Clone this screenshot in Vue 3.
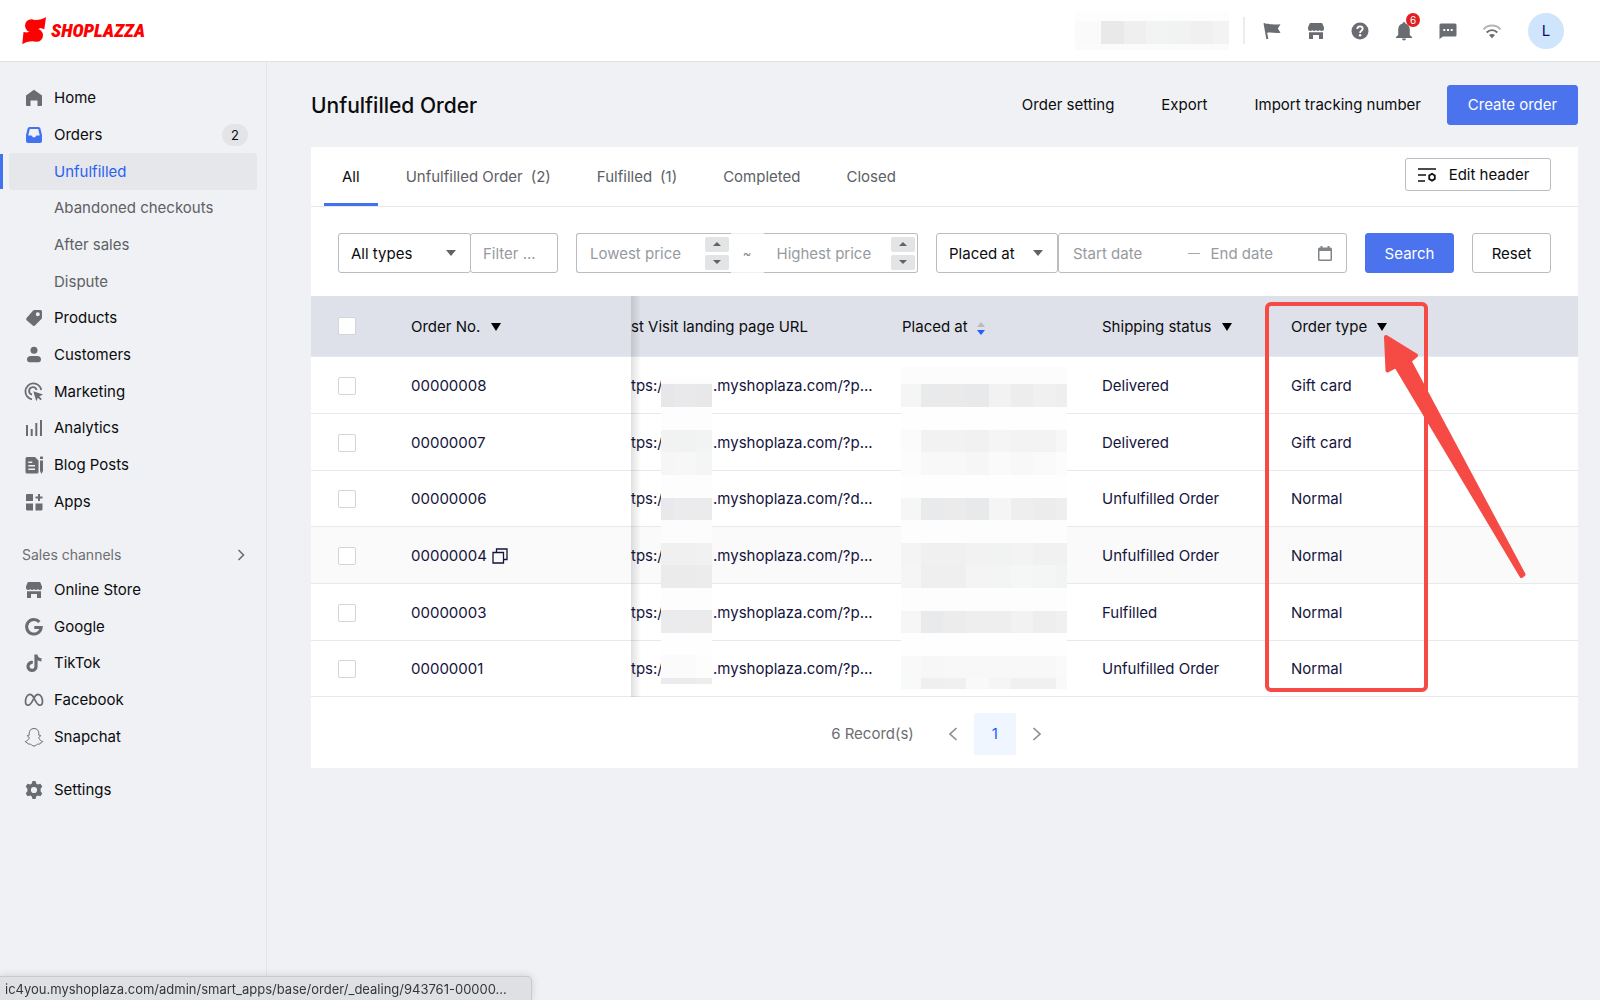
<script setup>
import { ref } from 'vue'

const icons = {
  home: '<path d="M10 1.800 18 7.400V17a1 1 0 0 1-1 1h-3.500v-5.500h-7V18H3a1 1 0 0 1-1-1V7.400Z"/>',
  orders:
    '<path fill-rule="evenodd" d="M5.500 2h9a2 2 0 0 1 1.900 1.500L18 10v6a2 2 0 0 1-2 2H4a2 2 0 0 1-2-2v-6l1.600-6.500A2 2 0 0 1 5.500 2Zm.3 2L4.300 10.500h3c.4 0 .6.2.7.600a2.100 2.100 0 0 0 4 0c.1-.4.300-.6.700-.6h3L14.200 4Z"/>',
  products:
    '<path fill-rule="evenodd" d="M10.500 2H16.500A1.500 1.500 0 0 1 18 3.500V9.500a2 2 0 0 1-.6 1.400l-6.500 6.500a1.500 1.500 0 0 1-2.100 0L2.600 12.200a1.500 1.500 0 0 1 0-2.100L9.100 2.600A2 2 0 0 1 10.500 2Zm3.300 2.300a2 2 0 1 0 0 4 2 2 0 0 0 0-4Z"/>',
  customers:
    '<circle cx="10" cy="5.300" r="3.500"/><path d="M6.500 11h7c2 0 3.500 1.500 3.500 3.500 0 1.600-1 2.800-2.500 2.800h-9C4 17.300 3 16.100 3 14.500 3 12.500 4.500 11 6.500 11Z"/>',
  marketing:
    '<g fill="none" stroke="currentColor" stroke-width="1.800"><path d="M8 17.300A8 8 0 1 1 17.300 8"/><path d="M8 12.600A3.800 3.800 0 1 1 12.600 8"/></g><path d="m9.300 9.300 9.700 3.200-3.800 1.900 2.600 2.600-1.300 1.300-2.600-2.600-1.600 3.600Z"/>',
  analytics:
    '<path d="M2 7h2v11H2zM6.700 11h2v7h-2zM11.300 5h2v13h-2zM16 2h2v16h-2z"/>',
  blog:
    '<path fill-rule="evenodd" d="M3 2h8l3.500 3.500V17a1.500 1.500 0 0 1-1.500 1.500H3A1.500 1.500 0 0 1 1.500 17V3.500A1.500 1.500 0 0 1 3 2Zm1.300 4.500v1.600h4V6.500Zm0 3.500v1.600H11V10Zm0 3.500v1.600H11v-1.600ZM16 5.500h3V16l-1.500 3L16 16ZM16.500 1.500h2a.5.500 0 0 1 .5.500v2h-3V2a.5.500 0 0 1 .5-.5Z"/>',
  apps:
    '<path d="M3.200 2H9v7H2V3.200C2 2.500 2.500 2 3.200 2ZM2 11.500h7v7H3.200c-.7 0-1.200-.5-1.200-1.200ZM11.500 11.500h7v5.800c0 .7-.5 1.200-1.200 1.200h-5.800ZM14 2h2v2.500h2.500v2H16V9h-2V6.500h-2.500v-2H14Z"/>',
  store:
    '<path d="M4.500 2h11a1 1 0 0 1 1 .7L18 6.500v1.200c0 1.300-1 2.300-2.300 2.300-.8 0-1.500-.4-1.900-1-.4.600-1.100 1-1.900 1S10.400 9.600 10 9c-.4.600-1.100 1-1.900 1s-1.500-.4-1.900-1c-.4.600-1.100 1-1.900 1A2.300 2.300 0 0 1 2 7.700V6.500l1.500-3.800a1 1 0 0 1 1-.7Z"/><path d="M3 11.300h14V18h-4v-4H7v4H3Z"/>',
  google:
    '<path fill="none" stroke="currentColor" stroke-width="3" d="M15.400 4.900A7.300 7.300 0 1 0 17.200 10.600H10.300"/>',
  tiktok:
    '<path fill="none" stroke="currentColor" stroke-width="3.200" d="M8.800 9.500A4 4 0 1 0 12 13.400V1.500M12 2.200c.3 2.800 2.300 4.500 5.500 4.700"/>',
  facebook:
    '<path fill="none" stroke="currentColor" stroke-width="1.700" d="M10 8C8.500 5 7 4.300 5.800 4.300 3.200 4.300 1.500 8 1.500 11.500c0 2.300 1 3.700 2.700 3.700C6.800 15.200 8.500 11 10 8s2.800-3.700 4.200-3.700c2.600 0 4.300 3.700 4.300 7.200 0 2.300-1 3.700-2.700 3.700C13.200 15.200 11.500 11 10 8Z"/>',
  snapchat:
    '<path fill="none" stroke="currentColor" stroke-width="1" d="M10 1.500c-3 0-4.800 2-4.800 4.800v1.900c-.6.300-1.200-.2-1.700.2-.5.600.2 1.100 1.500 1.700.5.300.2 1-.2 1.700-.8 1.400-2 2.300-3.500 2.700.1 1 1.600 1.200 2.400 1.500.2.500.1 1 .5 1.100.8 0 1.600-.2 2.500.2 1 .5 1.700 1.700 3.300 1.700s2.300-1.200 3.300-1.700c.9-.4 1.700-.2 2.500-.2.400-.1.300-.6.500-1.100.8-.3 2.300-.5 2.400-1.500-1.500-.4-2.700-1.300-3.500-2.700-.4-.7-.7-1.400-.2-1.700 1.300-.6 2-1.100 1.500-1.700-.5-.4-1.100.1-1.700-.2V6.300c0-2.800-1.800-4.800-4.800-4.800Z"/>',
  settings:
    '<path fill-rule="evenodd" d="M8.500 1h3l.7 2.600 1.600.9 2.600-.7 1.900 2.700-1.700 2.300v2.400l1.700 2.300-1.900 2.700-2.600-.7-1.600.9-.7 2.600h-3l-.7-2.600-1.600-.9-2.600.7-1.900-2.700 1.700-2.300V8.800L1.700 6.500l1.900-2.700 2.600.7 1.600-.9ZM10 6.900a3.100 3.100 0 1 0 0 6.200 3.100 3.100 0 0 0 0-6.200Z"/>',
  flag: '<path d="M1.500 2.200 3.300 2l.2 1c3-1 6 1.500 15 .2l-2.700 4.300 2.700 4.200c-5 1-9-1-13.300 0L6.300 18H4.300Z"/>',
  help: '<circle cx="10" cy="10" r="8.500"/><path fill="none" stroke="#fff" stroke-width="1.800" d="M7.300 8c0-1.600 1.200-2.600 2.700-2.600s2.700 1 2.700 2.400c0 2-2.600 2-2.600 4.100"/><circle cx="10.100" cy="14.200" r="1.200" fill="#fff"/>',
  bell: '<path d="M10 1a1.500 1.500 0 0 1 1.400 1.600C14 3.300 15.800 5.500 15.800 8.500V14l2.200 2v1H2v-1l2.200-2V8.500c0-3 1.800-5.200 4.400-5.900A1.500 1.500 0 0 1 10 1ZM8 17.500h4a2 2 0 0 1-4 0Z"/>',
  chat: '<path d="M3 2.500h14A1.500 1.500 0 0 1 18.500 4v10a1.500 1.500 0 0 1-1.500 1.500H5L1.500 18V4A1.500 1.500 0 0 1 3 2.500Z"/><path fill="#fff" d="M5.300 8h2v2h-2zM9 8h2v2H9zM12.700 8h2v2h-2z"/>',
  wifi: '<g fill="none" stroke="currentColor" stroke-width="1.900"><path opacity=".5" d="M1.500 8.300C6 3.300 14 3.300 18.500 8.300"/><path d="M4.700 11.500c3-3.200 7.600-3.200 10.600 0"/></g><path d="M7 14c1.700-1.500 4.300-1.500 6 0l-3 3.300Z"/>'
}

const mainNav = [
  { label: 'Home', icon: 'home' },
  { label: 'Orders', icon: 'orders', count: 2, open: true },
  { label: 'Unfulfilled', sub: true, active: true },
  { label: 'Abandoned checkouts', sub: true },
  { label: 'After sales', sub: true },
  { label: 'Dispute', sub: true },
  { label: 'Products', icon: 'products' },
  { label: 'Customers', icon: 'customers' },
  { label: 'Marketing', icon: 'marketing' },
  { label: 'Analytics', icon: 'analytics' },
  { label: 'Blog Posts', icon: 'blog' },
  { label: 'Apps', icon: 'apps' }
]
const channels = [
  { label: 'Online Store', icon: 'store' },
  { label: 'Google', icon: 'google' },
  { label: 'TikTok', icon: 'tiktok' },
  { label: 'Facebook', icon: 'facebook' },
  { label: 'Snapchat', icon: 'snapchat' }
]
const tools = ['flag', 'store', 'help', 'bell', 'chat', 'wifi']

const tabs = [
  { label: 'All' },
  { label: 'Unfulfilled Order', count: 2 },
  { label: 'Fulfilled', count: 1 },
  { label: 'Completed' },
  { label: 'Closed' }
]
const activeTab = ref('All')

const orders = [
  { no: '00000008', q: 'p', status: 'Delivered', type: 'Gift card' },
  { no: '00000007', q: 'p', status: 'Delivered', type: 'Gift card' },
  { no: '00000006', q: 'd', status: 'Unfulfilled Order', type: 'Normal' },
  { no: '00000004', q: 'p', status: 'Unfulfilled Order', type: 'Normal', hover: true },
  { no: '00000003', q: 'p', status: 'Fulfilled', type: 'Normal' },
  { no: '00000001', q: 'p', status: 'Unfulfilled Order', type: 'Normal' }
]

/* Pixelated masks over private data: each band is [top, bottom, ...cell colours]. */
const hostBands = [
  [0, 7, '#fdfdfd', '#fdfdfd', '#fdfdfd'],
  [7, 30, '#e7e7e9', '#e9e9eb', '#e8e8e8'],
  [30, 53, '#fdfdfd', '#fdfdfd', '#fdfdfd'],
  [53, 75, '#f2f2f2', '#f1f2f2', '#f2f3f3'],
  [75, 98, '#f6f6f6', '#f7f7f7', '#f4f5f5'],
  [98, 121, '#fdfdfd', '#fdfdfd', '#fdfdfd'],
  [121, 143, '#e9e9ec', '#ebebed', '#ebebec'],
  [143, 166, '#fcfcfc', '#fcfcfc', '#fcfcfc'],
  [166, 188, '#f0f0f0', '#f0f0f0', '#f1f1f1'],
  [188, 211, '#ebebeb', '#ebebeb', '#ececec'],
  [211, 233, '#fdfdfd', '#fdfdfd', '#fdfdfd'],
  [233, 256, '#ebebee', '#ebebee', '#ebebeb'],
  [256, 278, '#fefefe', '#fefefe', '#fefefe'],
  [278, 301, '#fbfbfb', '#fbfbfb', '#fdfdfd'],
  [301, 307, '#ebebee', '#ebebec', '#ededed']
]
const hostCols = [0, 13, 35, 51]
const light = (c) => Array(8).fill(c)
const dateBands = [
  [0, 17, ...light('#fcfcfc')],
  [17, 40, '#f5f5f5', '#e9eaec', '#eaeaea', '#e8e9eb', '#f2f2f2', '#ededed', '#f0f0f0', '#eeeeee'],
  [40, 63, ...light('#fefefe')],
  [63, 85, '#fbfbfb', '#f2f2f2', '#f2f2f2', '#f1f1f1', '#f5f5f5', '#f3f3f3', '#f3f3f3', '#f7f7f7'],
  [85, 108, '#fcfcfc', '#f8f8f8', '#f8f8f8', '#f6f6f6', '#fafafa', '#f8f8f8', '#fafafa', '#fcfcfc'],
  [108, 131, ...light('#fefefe')],
  [131, 153, '#f6f6f6', '#e9eaec', '#ebebec', '#e8e9eb', '#f5f5f5', '#eeeeee', '#ececec', '#eeeeee'],
  [153, 176, ...light('#fdfdfd')],
  [176, 198, '#f4f4f4', '#f0f0f0', '#f0f0f0', '#f1f2f1', '#f0f3f1', '#f2f3f2', '#f1f1f1', '#f1f1f1'],
  [198, 221, '#f5f5f5', '#efefef', '#efefef', '#f4f4f4', '#f2f5f4', '#f5f6f6', '#f4f5f5', '#f2f3f3'],
  [221, 244, ...light('#fdfdfd')],
  [244, 266, '#f6f6f6', '#e9eaec', '#ececec', '#eeeeee', '#eeeeee', '#f2f2f2', '#eeeeee', '#f0f0f0'],
  [266, 289, ...light('#fefefe')],
  [289, 311, '#f9f9f9', '#f7f7f7', '#f8f8f8', '#f8f8f8', '#f8f8f8', '#f8f8f8', '#f8f8f8', '#fafafa'],
  [311, 322, '#f8faf9', '#efefef', '#f0f0f0', '#f9f9f9', '#f5f5f5', '#f0f0f0', '#f0f0f0', '#f9f9f9']
]
const dateCols = [0, 20, 42, 65, 88, 110, 132, 155, 166]

function cells(bands, cols) {
  return bands.flatMap(([top, bottom, ...colors]) =>
    colors.map((fill, i) => ({ x: cols[i], y: top, width: cols[i + 1] - cols[i], height: bottom - top, fill }))
  )
}
const hostCells = cells(hostBands, hostCols)
const dateCells = cells(dateBands, dateCols)
const accountCells = cells(
  [
    [0, 9, '#fdfdfd', '#fdfdfd', '#fdfdfd', '#fdfdfd', '#fdfdfd', '#fdfdfd', '#fdfdfd'],
    [9, 32, '#fafafa', '#e9e9e9', '#efefef', '#f2f3f3', '#f1f3f3', '#f0f0f0', '#f3f3f3'],
    [32, 38, '#fbfbfb', '#fbfbfb', '#fbfbfb', '#fbfbfb', '#fbfbfb', '#fbfbfb', '#fbfbfb']
  ],
  [0, 26, 49, 71, 94, 116, 138, 154]
)
</script>

<template>
  <div class="app">
    <header class="topbar">
      <a class="brand" href="#" aria-label="Shoplazza">
        <svg width="24" height="28" viewBox="0 0 24 28" fill="#fe0000" aria-hidden="true">
          <circle cx="9.500" cy="8.700" r="6.500" />
          <circle cx="14.500" cy="18.300" r="6.500" />
          <path d="M24 0 22.300 12.300 18.500 11 12 14 13 3C17 3.200 21 2 24 0ZM.3 27.300 1.500 14.900 5 15.500 12 13 12 24.300C7 24 3.500 25.300.3 27.300Z" />
        </svg>
        <span>SHOPLAZZA</span>
      </a>
      <div class="tools">
        <svg class="account" width="154" height="38" viewBox="0 0 154 38" shape-rendering="crispEdges" aria-hidden="true">
          <rect v-for="(c, i) in accountCells" :key="i" v-bind="c" />
        </svg>
        <span class="rule"></span>
        <button v-for="(t, i) in tools" :key="i" class="tool" type="button" :aria-label="t">
          <svg width="20" height="20" viewBox="0 0 20 20" fill="currentColor" v-html="icons[t]"></svg>
          <span v-if="t === 'bell'" class="dot">6</span>
        </button>
        <button class="avatar" type="button">L</button>
      </div>
    </header>

    <div class="body">
      <aside class="sidebar">
        <nav class="nav main-nav">
          <a
            v-for="n in mainNav"
            :key="n.label"
            href="#"
            class="nav-item"
            :class="{ sub: n.sub, active: n.active, open: n.open }"
          >
            <svg v-if="n.icon" width="20" height="20" viewBox="0 0 20 20" fill="currentColor" v-html="icons[n.icon]"></svg>
            <span class="nav-label">{{ n.label }}</span>
            <span v-if="n.count" class="count">{{ n.count }}</span>
          </a>
        </nav>
        <button class="section" type="button">
          <span>Sales channels</span>
          <svg width="10" height="12" viewBox="0 0 10 12" fill="none" stroke="currentColor" stroke-width="1.600">
            <path d="m2.500 1 5 5-5 5" />
          </svg>
        </button>
        <nav class="nav channel-nav">
          <a v-for="n in channels" :key="n.label" href="#" class="nav-item">
            <svg width="20" height="20" viewBox="0 0 20 20" fill="currentColor" v-html="icons[n.icon]"></svg>
            <span class="nav-label">{{ n.label }}</span>
          </a>
        </nav>
        <nav class="nav settings-nav">
          <a href="#" class="nav-item">
            <svg width="20" height="20" viewBox="0 0 20 20" fill="currentColor" v-html="icons.settings"></svg>
            <span class="nav-label">Settings</span>
          </a>
        </nav>
      </aside>

      <main class="content">
        <div class="page-head">
          <h1>Unfulfilled Order</h1>
          <div class="page-actions">
            <button class="link" type="button">Order setting</button>
            <button class="link" type="button">Export</button>
            <button class="link" type="button">Import tracking number</button>
            <button class="btn primary create" type="button">Create order</button>
          </div>
        </div>

        <section class="card">
          <div class="tabs-row">
            <div class="tabs" role="tablist">
              <button
                v-for="t in tabs"
                :key="t.label"
                type="button"
                role="tab"
                class="tab"
                :class="{ on: activeTab === t.label }"
                :aria-selected="activeTab === t.label"
                @click="activeTab = t.label"
              >
                <span>{{ t.label }}</span><span v-if="t.count">({{ t.count }})</span>
              </button>
            </div>
            <button class="btn edit" type="button">
              <svg width="20" height="16" viewBox="0 0 20 16" fill="none" stroke="#111" stroke-width="1.600">
                <path d="M1 2h18M1 8h8M1 14h7" />
                <path stroke-width="1.800" d="m15 6.800 2.800 1.700v3.400L15 13.600l-2.800-1.700V8.500Z" />
              </svg>
              Edit header
            </button>
          </div>

          <form class="filters" @submit.prevent>
            <div class="joined">
              <label class="select types">
                <select aria-label="Order filter type"><option>All types</option></select>
                <svg width="10" height="6" viewBox="0 0 10 6"><path d="M0 0h10L5 6Z" fill="#5f6368" /></svg>
              </label>
              <input class="box keyword" type="text" placeholder="Filter ..." aria-label="Filter" />
            </div>
            <div class="price">
              <div class="num">
                <input type="number" placeholder="Lowest price" aria-label="Lowest price" />
                <span class="steps">
                  <button type="button" aria-label="Increase lowest price"><svg width="8" height="4" viewBox="0 0 8 4"><path d="M0 4 4 0l4 4Z" /></svg></button>
                  <button type="button" aria-label="Decrease lowest price"><svg width="8" height="4" viewBox="0 0 8 4"><path d="M0 0h8L4 4Z" /></svg></button>
                </span>
              </div>
              <span class="tilde">~</span>
              <div class="num last">
                <input type="number" placeholder="Highest price" aria-label="Highest price" />
                <span class="steps">
                  <button type="button" aria-label="Increase highest price"><svg width="8" height="4" viewBox="0 0 8 4"><path d="M0 4 4 0l4 4Z" /></svg></button>
                  <button type="button" aria-label="Decrease highest price"><svg width="8" height="4" viewBox="0 0 8 4"><path d="M0 0h8L4 4Z" /></svg></button>
                </span>
              </div>
            </div>
            <div class="joined dates">
              <label class="select placed">
                <select aria-label="Date type"><option>Placed at</option></select>
                <svg width="10" height="6" viewBox="0 0 10 6"><path d="M0 0h10L5 6Z" fill="#5f6368" /></svg>
              </label>
              <div class="box range">
                <input type="text" placeholder="Start date" aria-label="Start date" />
                <span class="dash"></span>
                <input type="text" placeholder="End date" aria-label="End date" />
                <svg width="14" height="15" viewBox="0 0 14 15" fill="#80868b" aria-hidden="true">
                  <path fill-rule="evenodd" d="M2.500 0h2v1.500h5V0h2v1.500h1A1.500 1.500 0 0 1 14 3v10.500A1.500 1.500 0 0 1 12.500 15h-11A1.500 1.500 0 0 1 0 13.500V3a1.500 1.500 0 0 1 1.500-1.500h1Zm-1 5v8.500h11V5Z" />
                </svg>
              </div>
            </div>
            <button class="btn primary search" type="submit">Search</button>
            <button class="btn reset" type="reset">Reset</button>
          </form>

          <div class="table-wrap">
            <table>
              <colgroup>
                <col class="c-check" /><col class="c-no" /><col class="c-url" /><col class="c-date" /><col class="c-ship" /><col />
              </colgroup>
              <thead>
                <tr>
                  <th class="check"><input type="checkbox" aria-label="Select all orders" /></th>
                  <th>Order No. <svg class="caret" width="10" height="8" viewBox="0 0 10 8"><path d="M0 0h10L5 8Z" /></svg></th>
                  <th class="url">st Visit landing page URL</th>
                  <th>
                    Placed at
                    <svg class="sort" width="8" height="13" viewBox="0 0 8 13"><path fill="#bbb" d="M0 5 4 0l4 5Z" /><path fill="#1f5eff" d="M0 8h8l-4 5Z" /></svg>
                  </th>
                  <th>Shipping status <svg class="caret" width="10" height="8" viewBox="0 0 10 8"><path d="M0 0h10L5 8Z" /></svg></th>
                  <th>Order type <svg class="caret" width="10" height="8" viewBox="0 0 10 8"><path d="M0 0h10L5 8Z" /></svg></th>
                </tr>
              </thead>
              <tbody>
                <tr v-for="o in orders" :key="o.no" :class="{ hover: o.hover }">
                  <td class="check"><input type="checkbox" :aria-label="'Select order ' + o.no" /></td>
                  <td>
                    {{ o.no }}
                    <svg v-if="o.hover" class="copy" width="16" height="16" viewBox="0 0 16 16" fill="none" stroke="#14143c" stroke-width="1.300">
                      <path d="M1 4.500h10.500V15H1ZM4.500 4.500V1H15v10.500h-3.500" />
                    </svg>
                  </td>
                  <td class="url">
                    <div class="link-text"><span class="scheme">tps://</span><span>.myshoplaza.com/?{{ o.q }}...</span></div>
                  </td>
                  <td></td>
                  <td>{{ o.status }}</td>
                  <td>{{ o.type }}</td>
                </tr>
              </tbody>
            </table>
            <div class="pin-shadow"></div>
            <svg class="mask host" width="51" height="307" viewBox="0 0 51 307" shape-rendering="crispEdges" aria-hidden="true">
              <rect v-for="(c, i) in hostCells" :key="i" v-bind="c" />
            </svg>
            <svg class="mask date" width="166" height="322" viewBox="0 0 166 322" shape-rendering="crispEdges" aria-hidden="true">
              <rect v-for="(c, i) in dateCells" :key="i" v-bind="c" />
            </svg>
            <div class="callout"></div>
            <svg class="arrow" width="146" height="248" viewBox="0 0 146 248" aria-hidden="true">
              <path
                d="M4 4 34 22.500 27.500 28 141.500 241.500 139.500 243 14 33 5.500 37.500Z"
                fill="#f64a45" stroke="#f64a45" stroke-width="4" stroke-linejoin="round"
              />
            </svg>
          </div>

          <div class="pager">
            <span class="total">6 Record(s)</span>
            <button type="button" class="step" aria-label="Previous page">
              <svg width="10" height="14" viewBox="0 0 10 14"><path d="M8.500 1 2 7l6.500 6" /></svg>
            </button>
            <button type="button" class="page">1</button>
            <button type="button" class="step" aria-label="Next page">
              <svg width="10" height="14" viewBox="0 0 10 14"><path d="M1.500 1 8 7l-6.500 6" /></svg>
            </button>
          </div>
        </section>
      </main>
    </div>

    <div class="status">ic4you.myshoplaza.com/admin/smart_apps/base/order/_dealing/943761-00000...</div>
  </div>
</template>

<style>
body {
  margin: 0;
  background: #f0f1f4;
}
</style>

<style scoped>
.app {
  display: flex;
  flex-direction: column;
  min-height: 100vh;
  font: 400 15px/20px Inter, "Liberation Sans", sans-serif;
  color: #0b0c0e;
}
* {
  box-sizing: border-box;
}
button,
input,
select {
  font: inherit;
  color: inherit;
  margin: 0;
}
button {
  padding: 0;
  border: 0;
  background: none;
  cursor: pointer;
}
a {
  color: inherit;
  text-decoration: none;
}
svg {
  flex: none;
}

/* Top bar */
.topbar {
  display: flex;
  align-items: center;
  justify-content: space-between;
  height: 62px;
  padding: 0 36px 0 22px;
  background: #fff;
  border-bottom: 1px solid #e1e2e4;
}
.brand {
  display: flex;
  align-items: center;
  gap: 5px;
  color: #fe0000;
  font: italic 900 19px/24px "Roboto Condensed", "Open Sans Condensed", Lato, sans-serif;
}
.tools {
  display: flex;
  align-items: center;
}
.rule {
  width: 2px;
  height: 27px;
  margin: 0 5px 0 14px;
  background: #ececee;
}
.tool {
  position: relative;
  display: grid;
  place-items: center;
  width: 44px;
  height: 40px;
  color: #696c71;
}
.dot {
  position: absolute;
  top: 2px;
  right: 6px;
  width: 14px;
  height: 14px;
  border-radius: 50%;
  background: #e02020;
  color: #fff;
  font-size: 10px;
  line-height: 14px;
  text-align: center;
}
.avatar {
  width: 36px;
  height: 36px;
  margin-left: 14px;
  border-radius: 50%;
  background: #cfe5fb;
  color: #0b0b70;
}

/* Sidebar */
.body {
  display: flex;
  flex: 1;
}
.sidebar {
  flex: none;
  width: 267px;
  padding: 18px 0;
  border-right: 1px solid #e4e5e8;
}
.nav {
  display: grid;
  grid-auto-rows: 1fr;
}
.main-nav {
  height: 440px;
}
.channel-nav {
  height: 183px;
}
.settings-nav {
  height: 36px;
  margin-top: 17px;
}
.nav-item {
  position: relative;
  display: flex;
  align-items: center;
  gap: 10px;
  margin: 0 9px;
  padding: 0 9px 0 15px;
  border-radius: 3px;
}
.nav-item svg {
  color: #696c71;
}
.nav-item.open svg {
  color: #4272ef;
}
.nav-label {
  flex: 1;
}
.nav-item.sub {
  padding-left: 45px;
  color: #5d6065;
}
.nav-item.active {
  background: #e6e7eb;
  color: #2d62f0;
}
.nav-item.active::before {
  content: "";
  position: absolute;
  top: 1px;
  bottom: 1px;
  left: -9px;
  width: 3px;
  background: #4272ef;
}
.count {
  width: 26px;
  height: 22px;
  border-radius: 11px;
  background: #e2e4e7;
  font-size: 13px;
  line-height: 22px;
  text-align: center;
}
.section {
  display: flex;
  align-items: center;
  justify-content: space-between;
  width: 100%;
  height: 34px;
  margin-top: 18px;
  padding: 0 20px 0 22px;
  color: #6b6e73;
  font-size: 14px;
}

/* Page */
.content {
  flex: 1;
  min-width: 0;
  padding: 22px 22px 40px 44px;
}
.page-head {
  display: flex;
  align-items: center;
  justify-content: space-between;
  height: 41px;
}
h1 {
  margin: 0;
  padding-top: 2px;
  font-size: 21px;
  line-height: 28px;
  font-weight: 500;
}
.page-actions {
  display: flex;
  align-items: center;
  gap: 47px;
}
.btn {
  display: inline-flex;
  align-items: center;
  justify-content: center;
  height: 40px;
  border: 1px solid #b9bcc1;
  border-radius: 3px;
  background: #fff;
}
.btn.primary {
  border-color: #4b73ee;
  background: #4b73ee;
  color: #fff;
}
.create {
  width: 131px;
  margin-left: -21px;
}
.card {
  margin-top: 22px;
  background: #fff;
}
.tabs-row {
  display: flex;
  align-items: flex-end;
  justify-content: space-between;
  height: 60px;
  padding: 0 27px 0 13px;
  border-bottom: 1px solid #e6e7e9;
}
.tabs {
  display: flex;
  align-self: stretch;
  gap: 10px;
}
.tab {
  display: flex;
  align-items: center;
  gap: 8px;
  padding: 4px 18px 0;
  border-bottom: 3px solid transparent;
  color: #5d6065;
}
.tab.on {
  color: #0b0c0e;
  border-image: linear-gradient(#4272ef, #4272ef) 1;
}
.edit {
  gap: 12px;
  width: 146px;
  height: 33px;
  margin-bottom: 15px;
  padding-right: 10px;
}

/* Filters */
.filters {
  display: flex;
  gap: 18px;
  padding: 26px 27px 23px;
}
.joined {
  display: flex;
}
.select {
  position: relative;
  display: flex;
  align-items: center;
}
.select select {
  appearance: none;
  width: 100%;
  height: 40px;
  padding: 2px 12px 0;
  border: 1px solid #b9bcc1;
  border-radius: 3px;
  background: #fff;
}
.select svg {
  position: absolute;
  right: 15px;
}
.types {
  width: 133px;
}
.placed {
  width: 122px;
}
.box {
  height: 40px;
  border: 1px solid #b9bcc1;
  border-radius: 3px;
  background: #fff;
}
.keyword {
  width: 88px;
  margin-left: -1px;
  padding: 1px 12px 0;
}
input::placeholder {
  color: #979a9f;
  opacity: 1;
}
.price {
  display: flex;
  width: 342px;
}
.num {
  display: flex;
  align-items: center;
  flex: 1;
  min-width: 0;
  height: 40px;
  padding: 0 2px 0 13px;
  border: 1px solid #b9bcc1;
  border-right: 0;
  border-radius: 3px 0 0 3px;
}
.num.last {
  border-right: 1px solid #b9bcc1;
  border-left: 0;
  border-radius: 0 3px 3px 0;
}
.num input,
.range input {
  flex: 1;
  min-width: 0;
  width: 0;
  padding: 2px 0 0;
  border: 0;
  background: none;
  outline: 0;
}
.num input {
  appearance: textfield;
}
.num input::-webkit-inner-spin-button {
  display: none;
}
.steps {
  display: grid;
  gap: 3px;
}
.steps button {
  display: grid;
  place-items: center;
  width: 24px;
  height: 15px;
  border-radius: 2px;
  background: #e3e4e6;
}
.steps svg {
  fill: #5f6368;
}
.tilde {
  width: 33px;
  border: solid #f0f0f1;
  border-width: 1px 0;
  color: #85888d;
  font-size: 13px;
  line-height: 38px;
  text-align: center;
}
.dates {
  flex: 1;
  min-width: 0;
}
.range {
  display: flex;
  align-items: center;
  flex: 1;
  min-width: 0;
  padding: 0 14px;
}
.range svg {
  margin-left: 7px;
}
.dash {
  width: 12px;
  height: 1px;
  margin: 0 11px 0 14px;
  background: #a5a8ad;
}
.search,
.reset {
  padding-top: 2px;
}
.search {
  width: 89px;
}
.reset {
  width: 79px;
}

/* Table */
.table-wrap {
  position: relative;
  overflow-x: clip;
}
table {
  width: 100%;
  table-layout: fixed;
  border-collapse: separate;
  border-spacing: 0;
}
.c-check {
  width: 80px;
}
.c-no {
  width: 240px;
}
.c-url {
  width: 251px;
}
.c-date {
  width: 200px;
}
.c-ship {
  width: 189px;
}
th,
td {
  padding: 2px 0 0 20px;
  border-bottom: 1px solid #e8e9ec;
  text-align: left;
  white-space: nowrap;
}
th {
  height: 61px;
  background: #dee1e9;
  font-weight: 400;
}
td {
  height: 57px;
  color: #14143c;
}
tr:nth-child(3n) td {
  height: 56px;
  padding-top: 1px;
}
tr.hover td {
  background: #fafafa;
}
.check {
  padding-left: 27px;
}
th.check {
  padding-top: 0;
}
.check input {
  display: block;
  appearance: none;
  width: 18px;
  height: 18px;
  border: 1px solid #d3d5d9;
  border-radius: 2px;
  background: #fff;
}
.url {
  padding-left: 0;
}
.link-text {
  display: flex;
}
.scheme {
  flex: none;
  width: 82px;
}
.caret {
  margin-left: 6px;
  vertical-align: 1px;
}
.sort {
  margin-left: 5px;
  vertical-align: -3px;
}
.copy {
  margin-left: 1px;
  vertical-align: -3px;
}
.pin-shadow {
  position: absolute;
  top: 0;
  bottom: 0;
  left: 320px;
  width: 10px;
  background: linear-gradient(90deg, rgba(0, 0, 0, 0.12), rgba(0, 0, 0, 0));
}
.mask {
  position: absolute;
}
.host {
  top: 81px;
  left: 350px;
}
.date {
  top: 71px;
  left: 590px;
}
.callout {
  position: absolute;
  top: 6px;
  left: 954px;
  width: 163px;
  height: 390px;
  border: 4px solid #f64a45;
  border-radius: 6px;
}
.arrow {
  position: absolute;
  top: 37px;
  left: 1071px;
}

/* Pagination */
.pager {
  display: flex;
  align-items: center;
  justify-content: center;
  padding: 16px 0 13px;
}
.total {
  margin-right: 18px;
  color: #6b6e73;
}
.page {
  width: 42px;
  height: 42px;
  border-radius: 2px;
  background: #eff6ff;
  color: #1f5eff;
}
.step {
  display: grid;
  place-items: center;
  width: 42px;
  height: 42px;
}
.step svg {
  fill: none;
  stroke: #8b8e93;
  stroke-width: 1.700;
}

.status {
  position: fixed;
  bottom: 0;
  left: 0;
  height: 24px;
  padding: 0 24px 0 5px;
  border: solid #c9cacd;
  border-width: 1px 1px 0 0;
  border-radius: 0 5px 0 0;
  background: #dfe0e4;
  box-shadow: 0 0 8px rgba(0, 0, 0, 0.15);
  color: #33363a;
  font-size: 13px;
  line-height: 24px;
}
</style>
